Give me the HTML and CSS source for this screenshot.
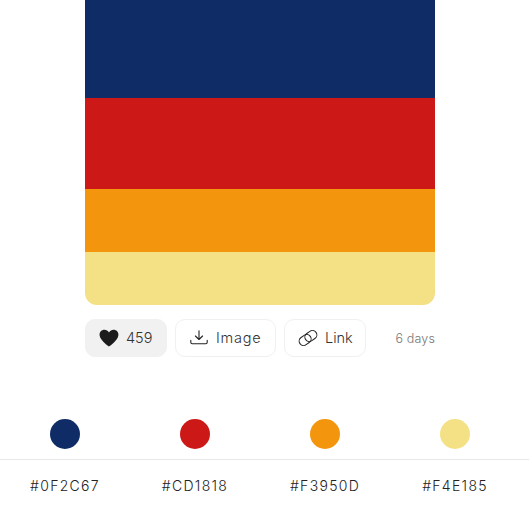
FILE: index.html
```html
<!DOCTYPE html>
<html>
<head>
  <meta charset="utf-8" />
  <title>Color Palette</title>
  <link rel="stylesheet" href="styles.css">
</head>
<body>

<div class="main">
  <div class="palette">
    <div class="band navy"></div>
    <div class="band red"></div>
    <div class="band orange"></div>
    <div class="band sand"></div>
  </div>

  <div class="actions">
    <a class="button like">
      <svg class="icon" width="20" height="18" viewBox="0 0 20 18"><path d="M10 17.600C8.900 16.500 1 11.400.6 6.200.3 2.800 2.700.7 5.400.7c1.900 0 3.500 1 4.600 2.700C11.100 1.700 12.700.7 14.600.7c2.700 0 5.100 2.100 4.800 5.500C19 11.400 11.100 16.500 10 17.600z" fill="#1c1c1c"/></svg>
      <span class="label">459</span>
    </a>
    <a class="button">
      <svg class="icon" width="20" height="16" viewBox="-1 0 20 16" fill="none" stroke="#222" stroke-width="1.100" stroke-linecap="round" stroke-linejoin="round"><path d="M9 .8v8.600M5.400 6 9 9.500 12.600 6M.8 10.400v1.900c0 .8.600 1.400 1.400 1.400h13.600c.8 0 1.400-.6 1.400-1.400v-1.900"/></svg>
      <span class="label wide">Image</span>
    </a>
    <a class="button">
      <svg class="icon" width="20" height="16" viewBox="0 0 20 16" fill="none" stroke="#222" stroke-width="1"><g transform="rotate(-35 10 8)"><rect x=".2" y="3.600" width="12.600" height="8.800" rx="4.400"/><rect x="7.200" y="3.600" width="12.600" height="8.800" rx="4.400"/></g></svg>
      <span class="label">Link</span>
    </a>
    <span class="time">6 days</span>
  </div>

  <div class="swatches">
    <div class="swatch"><span class="dot navy"></span></div>
    <div class="swatch"><span class="dot red"></span></div>
    <div class="swatch"><span class="dot orange"></span></div>
    <div class="swatch"><span class="dot sand"></span></div>
  </div>

  <div class="codes">
    <div class="code">#0F2C67</div>
    <div class="code">#CD1818</div>
    <div class="code">#F3950D</div>
    <div class="code">#F4E185</div>
  </div>
</div>

</body>
</html>
```

FILE: styles.css
```css
html { height: 100%; }
body {
  margin: 0;
  background: #fff;
  color: #222;
  font-family: 'Inter', 'Open Sans', sans-serif;
}
.navy { background: #0f2c67; }
.red { background: #cd1818; }
.orange { background: #f3950d; }
.sand { background: #f4e185; }

.palette {
  width: 350px;
  margin-left: 85px;
  border-radius: 0 0 12px 12px;
  overflow: hidden;
}
.band:nth-child(1) { height: 98px; }
.band:nth-child(2) { height: 91px; }
.band:nth-child(3) { height: 63px; }
.band:nth-child(4) { height: 53px; }

.actions {
  display: flex;
  align-items: center;
  gap: 8px;
  width: 350px;
  margin: 14px 0 0 85px;
}
.button {
  display: flex;
  align-items: center;
  gap: 7px;
  box-sizing: border-box;
  height: 38px;
  padding: 0 13px;
  border: 1px solid #f0f0f0;
  border-radius: 10px;
  font-size: 14.500px;
  font-weight: 300;
  color: #333;
}
.button:nth-child(2) { width: 101px; }
.button:nth-child(3) { width: 82px; }
.like {
  width: 82px;
  background: #f1f1f1;
  border-color: #f1f1f1;
}
.icon { flex: none; }
.label { margin-bottom: 2px; }
.wide { letter-spacing: 0.800px; }
.time {
  margin-left: auto;
  font-size: 12.500px;
  font-weight: 300;
  letter-spacing: 0.150px;
  color: #777;
}

.swatches {
  display: grid;
  grid-template-columns: repeat(4, 130px);
  margin-top: 62px;
  padding-bottom: 10px;
  border-bottom: 1px solid #e9e9e9;
}
.swatch {
  display: flex;
  justify-content: center;
}
.dot {
  width: 30px;
  height: 30px;
  border-radius: 50%;
}
.codes {
  display: grid;
  grid-template-columns: repeat(4, 130px);
  padding-top: 17px;
}
.code {
  text-align: center;
  font-size: 14px;
  font-weight: 300;
  line-height: 18px;
  letter-spacing: 1.300px;
  color: #222;
}
```
